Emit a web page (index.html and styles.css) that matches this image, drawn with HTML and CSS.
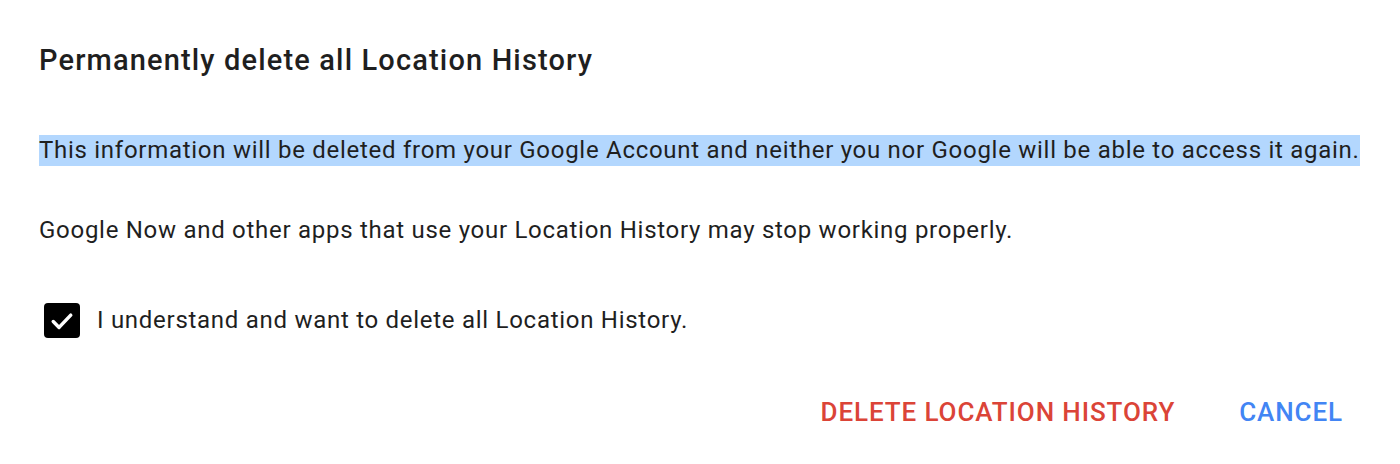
FILE: index.html
```html
<!DOCTYPE html>
<html>
<head>
<meta charset="utf-8">
<link rel="stylesheet" href="styles.css">
</head>
<body>
<div class="dialog">
  <h1 class="title">Permanently delete all Location History</h1>
  <p class="text"><span class="hl">This information will be deleted from your Google Account and neither you nor Google will be able to access it again.</span></p>
  <p class="text">Google Now and other apps that use your Location History may stop working properly.</p>
  <label class="check">
    <span class="box"><svg viewBox="0 0 24 24" width="28" height="28"><path d="M4.5 12.5l5 5 10-10.5" fill="none" stroke="#fff" stroke-width="3" stroke-linecap="round" stroke-linejoin="round"/></svg></span>
    <span class="check-label">I understand and want to delete all Location History.</span>
  </label>
  <div class="actions">
    <button class="btn btn-delete">DELETE LOCATION HISTORY</button>
    <button class="btn btn-cancel">CANCEL</button>
  </div>
</div>
</body>
</html>
```
FILE: styles.css
```css
html, body {
  margin: 0;
  padding: 0;
  background: #fff;
}
body {
  font-family: Roboto, "Liberation Sans", sans-serif;
  color: #1f1f1f;
}
.dialog {
  width: 1400px;
  height: 464px;
  box-sizing: border-box;
  padding: 40px 0 0 39px;
  display: flex;
  flex-direction: column;
}
.title {
  margin: 0;
  font-size: 29px;
  font-weight: 500;
  line-height: 40px;
  letter-spacing: 1.15px;
  color: #1f1f1f;
}
.text {
  margin: 0;
  font-size: 24px;
  line-height: 31px;
  letter-spacing: 0.72px;
}
.title + .text {
  margin-top: 55px;
}
.text + .text {
  margin-top: 49px;
}
.hl {
  display: inline-block;
  background: #b3d7fe;
  line-height: 31px;
}
.check {
  margin-top: 57px;
  display: flex;
  align-items: center;
  gap: 17px;
  margin-left: 5px;
}
.box {
  width: 36px;
  height: 35px;
  border-radius: 4px;
  background: #000;
  display: flex;
  align-items: center;
  justify-content: center;
}
.check-label {
  font-size: 24px;
  line-height: 31px;
  letter-spacing: 0.72px;
}
.actions {
  margin-top: 59px;
  display: flex;
  justify-content: flex-end;
  gap: 64px;
  padding-right: 57px;
}
.btn {
  border: none;
  background: none;
  padding: 0;
  font-family: Roboto, "Liberation Sans", sans-serif;
  font-size: 26px;
  font-weight: 500;
  line-height: 30px;
  letter-spacing: 0.9px;
  cursor: pointer;
}
.btn-delete { color: #db4437; }
.btn-cancel { color: #4285f4; }
```
